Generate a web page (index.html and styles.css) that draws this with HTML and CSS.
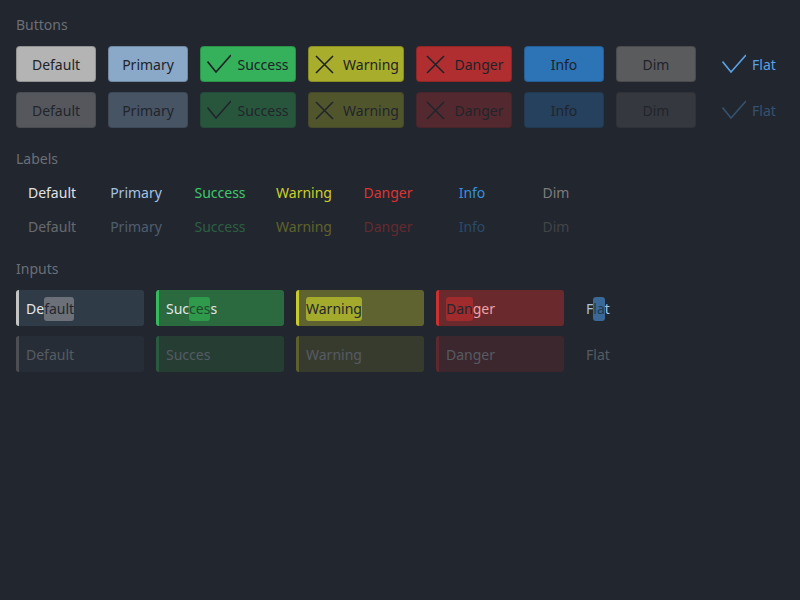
FILE: index.html
```html
<!DOCTYPE html>
<html>
<head>
<meta charset="utf-8">
<link rel="stylesheet" href="styles.css">
</head>
<body>
<div class="page">
  <section class="section">
    <div class="heading">Buttons</div>
    <div class="rows">
      <div class="row">
        <div class="btn btn-default">Default</div>
        <div class="btn btn-primary">Primary</div>
        <div class="btn btn-icon btn-success"><svg class="ico" viewBox="0 0 24 24"><path d="M0.5 9.5 L9 20 L24 3"/></svg><span>Success</span></div>
        <div class="btn btn-icon btn-warning"><svg class="ico" viewBox="0 0 24 24"><path d="M3 4 L20 21 M20 4 L3 21"/></svg><span>Warning</span></div>
        <div class="btn btn-icon btn-danger"><svg class="ico" viewBox="0 0 24 24"><path d="M3 4 L20 21 M20 4 L3 21"/></svg><span>Danger</span></div>
        <div class="btn btn-info">Info</div>
        <div class="btn btn-dim">Dim</div>
        <div class="btn btn-flat"><svg class="ico" viewBox="0 0 24 24"><path d="M0.5 9.5 L9 20 L24 3"/></svg><span>Flat</span></div>
      </div>
      <div class="row disabled">
        <div class="btn btn-default">Default</div>
        <div class="btn btn-primary">Primary</div>
        <div class="btn btn-icon btn-success"><svg class="ico" viewBox="0 0 24 24"><path d="M0.5 9.5 L9 20 L24 3"/></svg><span>Success</span></div>
        <div class="btn btn-icon btn-warning"><svg class="ico" viewBox="0 0 24 24"><path d="M3 4 L20 21 M20 4 L3 21"/></svg><span>Warning</span></div>
        <div class="btn btn-icon btn-danger"><svg class="ico" viewBox="0 0 24 24"><path d="M3 4 L20 21 M20 4 L3 21"/></svg><span>Danger</span></div>
        <div class="btn btn-info">Info</div>
        <div class="btn btn-dim">Dim</div>
        <div class="btn btn-flat"><svg class="ico" viewBox="0 0 24 24"><path d="M0.5 9.5 L9 20 L24 3"/></svg><span>Flat</span></div>
      </div>
    </div>
  </section>

  <section class="section">
    <div class="heading">Labels</div>
    <div class="rows">
      <div class="row labels">
        <div class="lbl lbl-default">Default</div>
        <div class="lbl lbl-primary">Primary</div>
        <div class="lbl lbl-success">Success</div>
        <div class="lbl lbl-warning">Warning</div>
        <div class="lbl lbl-danger">Danger</div>
        <div class="lbl lbl-info">Info</div>
        <div class="lbl lbl-dim">Dim</div>
      </div>
      <div class="row labels disabled">
        <div class="lbl lbl-default">Default</div>
        <div class="lbl lbl-primary">Primary</div>
        <div class="lbl lbl-success">Success</div>
        <div class="lbl lbl-warning">Warning</div>
        <div class="lbl lbl-danger">Danger</div>
        <div class="lbl lbl-info">Info</div>
        <div class="lbl lbl-dim">Dim</div>
      </div>
    </div>
  </section>

  <section class="section">
    <div class="heading">Inputs</div>
    <div class="rows">
      <div class="row">
        <div class="inp inp-default"><span class="val">De<span class="sel">fault</span></span></div>
        <div class="inp inp-success"><span class="val">Suc<span class="sel">ces</span>s</span></div>
        <div class="inp inp-warning"><span class="val"><span class="sel">Warning</span></span></div>
        <div class="inp inp-danger"><span class="val"><span class="sel">Dan</span>ger</span></div>
        <div class="inp inp-flat"><span class="val">F<span class="sel">la</span>t</span></div>
      </div>
      <div class="row disabled">
        <div class="inp inp-default"><span class="val">Default</span></div>
        <div class="inp inp-success"><span class="val">Succes</span></div>
        <div class="inp inp-warning"><span class="val">Warning</span></div>
        <div class="inp inp-danger"><span class="val">Danger</span></div>
        <div class="inp inp-flat"><span class="val">Flat</span></div>
      </div>
    </div>
  </section>
</div>
</body>
</html>
```

FILE: styles.css
```css
html, body {
  margin: 0;
  padding: 0;
  background: #22262e;
  width: 800px;
  height: 600px;
  overflow: hidden;
}

.page {
  padding: 16px;
  display: flex;
  flex-direction: column;
  gap: 22px;
  font-family: "Noto Sans", "Open Sans", sans-serif;
  font-size: 14px;
}

.section {
  display: flex;
  flex-direction: column;
  gap: 14px;
}

.heading {
  color: #6b6f77;
  font-size: 14px;
  line-height: 18px;
  height: 16px;
}

.rows {
  display: flex;
  flex-direction: column;
  gap: 10px;
}

.row {
  display: flex;
  gap: 12px;
  align-items: center;
}

.disabled {
  opacity: 0.35;
}

/* Buttons */
.btn {
  box-sizing: border-box;
  height: 36px;
  min-width: 80px;
  padding: 2px 6px 0;
  border-radius: 4px;
  border: 1px solid rgba(0, 0, 0, 0.18);
  display: flex;
  align-items: center;
  justify-content: center;
  gap: 6px;
  color: #1f2228;
  line-height: 20px;
}

.btn-icon {
  min-width: 96px;
}

.ico {
  width: 24px;
  height: 24px;
  flex: none;
  fill: none;
  stroke: currentColor;
  stroke-width: 1.6;
  margin-top: -2px;
}

.btn-default { background: #b4b4b4; }
.btn-primary { background: #8aa9c9; }
.btn-success { background: #34b15a; }
.btn-warning { background: #a8ae2b; }
.btn-danger { background: #b02e2f; }
.btn-info { background: #2c74b5; }
.btn-dim { background: #5a5b5d; }
.btn-flat {
  background: transparent;
  border-color: transparent;
  color: #5aa2e6;
  padding-left: 8px;
}

/* Labels */
.labels .lbl {
  width: 72px;
  height: 24px;
  line-height: 26px;
  text-align: center;
  white-space: nowrap;
}

.lbl-default { color: #e2e2e2; }
.lbl-primary { color: #a3c3e3; }
.lbl-success { color: #3fc86b; }
.lbl-warning { color: #cdd02b; }
.lbl-danger { color: #dc3434; }
.lbl-info { color: #3a8fda; }
.lbl-dim { color: #7c7c7c; }

/* Inputs */
.inp {
  box-sizing: border-box;
  width: 128px;
  height: 36px;
  border-radius: 3px;
  border-left: 3px solid #b4b4b4;
  padding: 1px 0 0 7px;
  display: flex;
  align-items: center;
  color: #e4e6ea;
  white-space: nowrap;
}

.val {
  line-height: 24px;
}

.sel {
  display: inline-block;
  height: 24px;
  line-height: 24px;
  border-radius: 3px;
  color: #22262e;
}

.inp-default { background: #2f3c48; border-left-color: #c4c4c4; }
.inp-default .sel { background: #6c7179; }

.inp-success { background: #2b6a3e; border-left-color: #36b85d; }
.inp-success .sel { background: #2f9a4b; color: #1f4a2c; }

.inp-warning { background: #5e6330; border-left-color: #c8cc2a; }
.inp-warning .sel { background: #a4aa2c; }

.inp-danger { background: #6a2a2d; border-left-color: #cc3131; color: #f2a3a3; }
.inp-danger .sel { background: #9f2b2d; }

.inp-flat {
  background: transparent;
  border-left-color: transparent;
  color: #a7c3df;
}
.inp-flat .sel { background: #3a6997; color: #24384e; }

.disabled .inp { color: #b8bcc2; }
.disabled .inp-default { border-left-color: #9a9a9a; }
```
